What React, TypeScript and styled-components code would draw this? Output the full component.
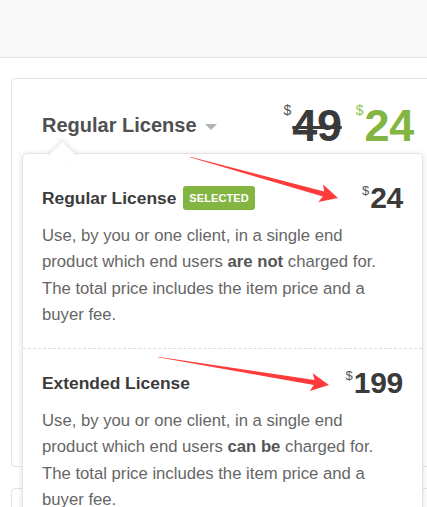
import React from 'react';
import styled, { createGlobalStyle } from 'styled-components';

const GlobalStyle = createGlobalStyle`
  html, body {
    margin: 0;
    padding: 0;
    background: #ffffff;
    font-family: "Liberation Sans", Arial, sans-serif;
    overflow: hidden;
  }
`;

const Page = styled.div`
  position: relative;
  width: 427px;
  height: 507px;
  overflow: hidden;
`;

const TopBar = styled.div`
  height: 57px;
  background: #f9f9f9;
  border-bottom: 1px solid #e5e5e5;
`;

const Content = styled.div`
  display: flex;
  flex-direction: column;
  gap: 21px;
  padding: 20px 0 0 11px;
`;

const Card = styled.div<{ $height: number }>`
  position: relative;
  box-sizing: border-box;
  width: 440px;
  height: ${(p) => p.$height}px;
  border: 1px solid #dfe5eb;
  border-radius: 4px;
  background: #fff;
  padding: 24px 30px;
`;

const Header = styled.div`
  display: flex;
  align-items: center;
  justify-content: space-between;
  height: 44px;
  padding-right: 6px;
`;

const LicenseSelect = styled.div`
  display: flex;
  align-items: center;
  gap: 8px;
  font-size: 20px;
  font-weight: bold;
  color: #505050;
  margin-top: 1px;
`;

const Caret = styled.span`
  width: 0;
  height: 0;
  border-left: 6px solid transparent;
  border-right: 6px solid transparent;
  border-top: 6px solid #b3b3b3;
  margin-top: 3px;
`;

const Prices = styled.div`
  display: flex;
  align-items: flex-start;
  gap: 14px;
`;

const Price = styled.span<{ $size: number; $color: string; $struck?: boolean }>`
  display: inline-flex;
  align-items: flex-start;
  font-size: ${(p) => p.$size}px;
  line-height: 1;
  font-weight: bold;
  color: ${(p) => p.$color};
  letter-spacing: -0.3px;

  b {
    font-weight: bold;
    text-decoration: ${(p) => (p.$struck ? 'line-through' : 'none')};
    text-decoration-thickness: 3px;
  }
`;

const Dollar = styled.span<{ $size: number; $color: string; $drop?: number }>`
  font-size: ${(p) => p.$size}px;
  font-weight: normal;
  line-height: 1;
  color: ${(p) => p.$color};
  margin-top: ${(p) => p.$drop ?? 0}px;
  margin-right: 1px;
  letter-spacing: 0;
`;

const Dropdown = styled.div`
  position: absolute;
  top: 74px;
  left: 10px;
  width: 401px;
  box-sizing: border-box;
  padding-top: 10px;
  background: #fff;
  border: 1px solid #e3e3e3;
  border-radius: 5px;
  box-shadow: 0 1px 6px rgba(0, 0, 0, 0.13);
  z-index: 2;

  &::before {
    content: '';
    position: absolute;
    top: -9px;
    left: 29px;
    width: 20px;
    height: 20px;
    background: #fff;
    transform: rotate(45deg);
    box-shadow: -2px -2px 4px rgba(0, 0, 0, 0.07);
    border-left: 1px solid #ececec;
    border-top: 1px solid #ececec;
  }
`;

const Option = styled.div<{ $divider?: boolean }>`
  position: relative;
  padding: 19px 19px 20px 19px;
  border-top: ${(p) => (p.$divider ? '1px dashed #dcdcdc' : 'none')};
`;

const OptionRow = styled.div`
  display: flex;
  align-items: center;
  justify-content: space-between;
  height: 30px;
  margin-bottom: 10px;
`;

const OptionTitle = styled.div`
  display: flex;
  align-items: center;
  font-size: 17.4px;
  font-weight: bold;
  color: #3b3b3b;
`;

const Badge = styled.span`
  display: inline-flex;
  align-items: center;
  height: 24px;
  padding: 0 6px;
  margin-left: 7px;
  border-radius: 3px;
  background: #82b541;
  color: #fff;
  font-size: 11px;
  font-weight: bold;
  letter-spacing: 0.1px;
`;

const Description = styled.p`
  margin: 0;
  max-width: 358px;
  font-size: 16.7px;
  line-height: 26.3px;
  color: #666;

  strong {
    color: #555;
  }
`;

const Arrows = styled.svg`
  position: absolute;
  inset: 0;
  pointer-events: none;
  z-index: 5;
`;

type Pt = [number, number];

function arrowPoints(tail: Pt, tip: Pt): string {
  const dx = tip[0] - tail[0];
  const dy = tip[1] - tail[1];
  const len = Math.hypot(dx, dy);
  const ux = dx / len;
  const uy = dy / len;
  const nx = -uy;
  const ny = ux;
  const headLen = 18;
  const headHalf = 9;
  const base: Pt = [tip[0] - ux * headLen, tip[1] - uy * headLen];
  const neck: Pt = [base[0] + ux * 3, base[1] + uy * 3];
  const pts: Pt[] = [
    [tail[0] + nx * 0.3, tail[1] + ny * 0.3],
    [neck[0] + nx * 2.6, neck[1] + ny * 2.6],
    [base[0] + nx * headHalf, base[1] + ny * headHalf],
    tip,
    [base[0] - nx * headHalf, base[1] - ny * headHalf],
    [neck[0] - nx * 2.6, neck[1] - ny * 2.6],
    [tail[0] - nx * 0.3, tail[1] - ny * 0.3],
  ];
  return pts.map((p) => `${p[0].toFixed(1)},${p[1].toFixed(1)}`).join(' ');
}

const options = [
  {
    title: 'Regular License',
    selected: true,
    price: '24',
    charged: 'are not',
  },
  {
    title: 'Extended License',
    selected: false,
    price: '199',
    charged: 'can be',
  },
];

export default function App() {
  return (
    <Page>
      <GlobalStyle />
      <TopBar />
      <Content>
        <Card $height={389}>
          <Header>
            <LicenseSelect>
              Regular License
              <Caret />
            </LicenseSelect>
            <Prices>
              <Price $size={45} $color="#3a3a3a" $struck>
                <Dollar $size={14} $color="#555">$</Dollar>
                <b>49</b>
              </Price>
              <Price $size={45} $color="#82b541">
                <Dollar $size={14} $color="#8fc153">$</Dollar>
                <b>24</b>
              </Price>
            </Prices>
          </Header>

          <Dropdown>
            {options.map((o, i) => (
              <Option key={o.title} $divider={i > 0}>
                <OptionRow>
                  <OptionTitle>
                    {o.title}
                    {o.selected && <Badge>SELECTED</Badge>}
                  </OptionTitle>
                  <Price $size={30} $color="#3a3a3a">
                    <Dollar $size={13} $color="#555" $drop={1}>$</Dollar>
                    <b>{o.price}</b>
                  </Price>
                </OptionRow>
                <Description>
                  Use, by you or one client, in a single end product which end users{' '}
                  <strong>{o.charged}</strong> charged for. The total price includes the item
                  price and a buyer fee.
                </Description>
              </Option>
            ))}
          </Dropdown>
        </Card>
        <Card $height={60} />
      </Content>

      <Arrows width={427} height={507} viewBox="0 0 427 507">
        <polygon points={arrowPoints([190, 157], [338, 198])} fill="#ff3b3b" />
        <polygon points={arrowPoints([158, 357], [329, 385])} fill="#ff3b3b" />
      </Arrows>
    </Page>
  );
}
